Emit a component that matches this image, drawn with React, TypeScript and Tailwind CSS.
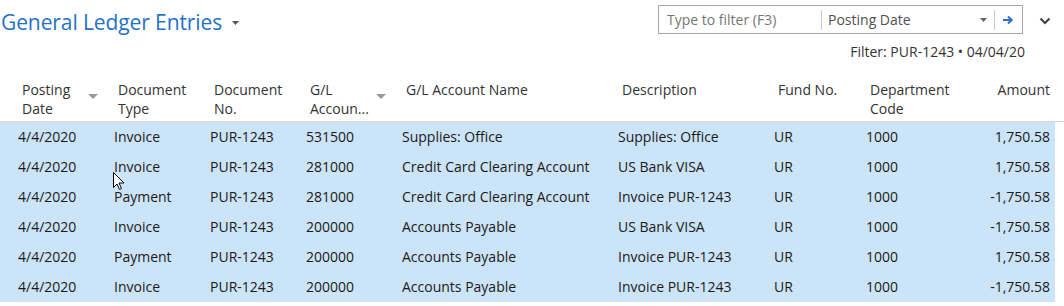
import React from "react";

const rows = [
  ["4/4/2020", "Invoice", "PUR-1243", "531500", "Supplies: Office", "Supplies: Office", "UR", "1000", "1,750.58"],
  ["4/4/2020", "Invoice", "PUR-1243", "281000", "Credit Card Clearing Account", "US Bank VISA", "UR", "1000", "1,750.58"],
  ["4/4/2020", "Payment", "PUR-1243", "281000", "Credit Card Clearing Account", "Invoice PUR-1243", "UR", "1000", "-1,750.58"],
  ["4/4/2020", "Invoice", "PUR-1243", "200000", "Accounts Payable", "US Bank VISA", "UR", "1000", "-1,750.58"],
  ["4/4/2020", "Payment", "PUR-1243", "200000", "Accounts Payable", "Invoice PUR-1243", "UR", "1000", "1,750.58"],
  ["4/4/2020", "Invoice", "PUR-1243", "200000", "Accounts Payable", "Invoice PUR-1243", "UR", "1000", "-1,750.58"],
];

const widths = ["w-[96px]", "w-[96px]", "w-[96px]", "w-[96px]", "w-[216px]", "w-[156px]", "w-[92px]", "w-[100px]"];

function SortArrow() {
  return (
    <svg width="10" height="6" viewBox="0 0 10 6" className="absolute right-[2px] top-[20px]">
      <path d="M0 0 L10 0 L5 5 Z" fill="#9a9a9a" />
    </svg>
  );
}

export default function App() {
  const font = { fontFamily: '"Open Sans", "Noto Sans", sans-serif' };
  return (
    <div className="w-[1064px] h-[306px] bg-white overflow-hidden relative text-[#212121]" style={font}>
      {/* top bar */}
      <div className="flex items-start h-[74px]">
        <div className="flex items-center pt-[8px] pl-[1px]">
          <span className="text-[21px] leading-[28px] text-[#1f72c8] tracking-[-0.1px]">General Ledger Entries</span>
          <svg width="7" height="4" viewBox="0 0 7 4" className="ml-[10px] mt-[2px]">
            <path d="M0 0 L7 0 L3.5 4 Z" fill="#555" />
          </svg>
        </div>
        <div className="ml-auto flex flex-col items-end pt-[5px]">
          <div className="flex items-center">
            <div className="flex items-center w-[365px] h-[29px] border border-[#a6a6a6] bg-white">
              <span className="pl-[8px] w-[162px] text-[14px] text-[#767676]">Type to filter (F3)</span>
              <div className="w-px h-[20px] bg-[#c8c8c8]" />
              <span className="pl-[6px] text-[14px] text-[#505050] flex-1">Posting Date</span>
              <svg width="7" height="4" viewBox="0 0 7 4" className="mr-[7px]">
                <path d="M0 0 L7 0 L3.5 4 Z" fill="#666" />
              </svg>
              <div className="w-px h-[20px] bg-[#c8c8c8]" />
              <div className="w-[27px] flex justify-center">
                <svg width="11" height="10" viewBox="0 0 11 10">
                  <path d="M0 5 H8 M5 1.5 L8.7 5 L5 8.5" stroke="#2d70bf" strokeWidth="2" fill="none" />
                </svg>
              </div>
            </div>
            <div className="w-[41px] flex justify-center pl-[2px] pt-[2px]">
              <svg width="12" height="8" viewBox="0 0 12 8">
                <path d="M1.5 1.5 L6 6 L10.5 1.5" stroke="#444" strokeWidth="2.2" fill="none" />
              </svg>
            </div>
          </div>
          <div className="mt-[7px] mr-[39px] text-[14px] text-[#333]">Filter: PUR-1243 • 04/04/20</div>
        </div>
      </div>

      {/* header */}
      <div className="flex h-[48px] border-b border-[#d4d4d4] text-[14px] leading-[19px] text-[#333]">
        <div className="w-[4px]" />
        {[
          ["Posting", "Date", true],
          ["Document", "Type", false],
          ["Document", "No.", false],
          ["G/L", "Accoun...", true],
          ["G/L Account Name", "", false],
          ["Description", "", false],
          ["Fund No.", "", false],
          ["Department", "Code", false],
        ].map(([a, b, s], i) => (
          <div key={i} className={`${widths[i]} relative pl-[18px] pt-[6px]`}>
            <div>{a as string}</div>
            {b ? <div>{b as string}</div> : null}
            {s ? <SortArrow /> : null}
          </div>
        ))}
        <div className="flex-1 text-right pr-[14px] pt-[6px]">Amount</div>
      </div>

      {/* rows */}
      <div className="w-[1055px] bg-[#cce4f7]">
        {rows.map((r, i) => (
          <div key={i} className="flex h-[30px] items-center pb-[2px] text-[14px] text-[#1a1a1a]">
            <div className="w-[4px]" />
            {r.slice(0, 8).map((c, j) => (
              <div key={j} className={`${widths[j]} pl-[14px] whitespace-nowrap`}>{c}</div>
            ))}
            <div className="flex-1 text-right pr-[5px]">{r[8]}</div>
          </div>
        ))}
      </div>

      {/* mouse cursor */}
      <svg width="12" height="19" viewBox="0 0 12 19" className="absolute left-[113px] top-[172px]">
        <path d="M0.5 0.5 L0.5 15.5 L4 12 L6.5 17.5 L8.5 16.5 L6 11 L11 11 Z" fill="#fff" stroke="#000" strokeWidth="1" />
      </svg>
    </div>
  );
}
